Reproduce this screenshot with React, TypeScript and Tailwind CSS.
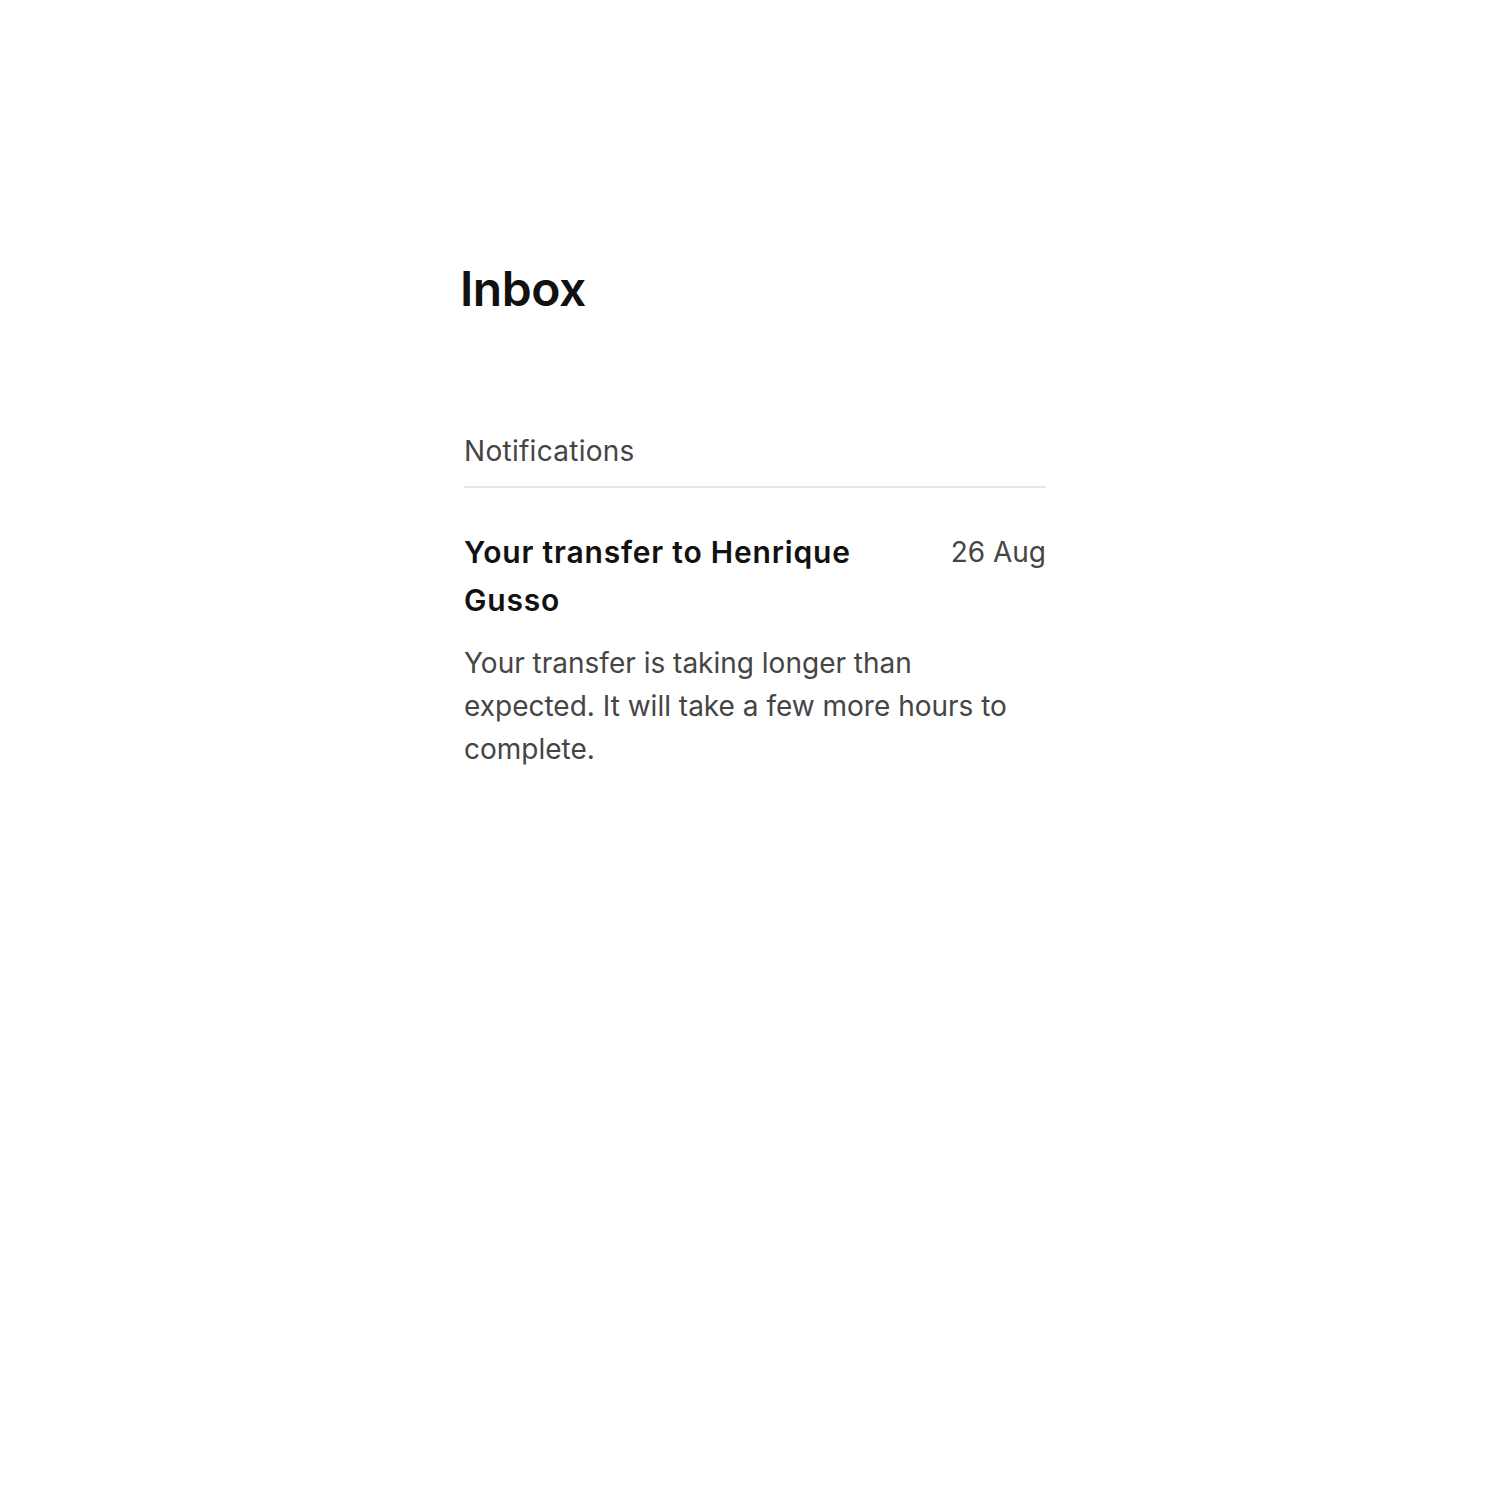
export default function App() {
  return (
    <div className="min-h-[1510px] bg-white font-['Inter','Liberation_Sans',sans-serif]">
      <div className="mx-auto w-[582px] pt-[260px]">
        <h1 className="-ml-[4px] text-[48px] font-semibold leading-[58px] tracking-[-0.01em] text-[#111]">
          Inbox
        </h1>

        <section className="mt-[116px]">
          <h2 className="border-b-2 border-[#e6e6e6] pb-[18px] text-[28px] leading-[34px] tracking-[0.01em] text-[#454545]">
            Notifications
          </h2>

          <article className="pt-[40px]">
            <div className="flex items-start justify-between gap-[40px]">
              <h3 className="text-[30px] font-semibold leading-[48px] tracking-[0.027em] text-[#111]">
                Your transfer to Henrique Gusso
              </h3>
              <span className="shrink-0 text-[28px] leading-[48px] text-[#454545]">26 Aug</span>
            </div>
            <p className="mt-[18px] text-[28px] leading-[43px] text-[#454545]">
              Your transfer is taking longer than expected. It will take a few more hours to complete.
            </p>
          </article>
        </section>
      </div>
    </div>
  );
}
